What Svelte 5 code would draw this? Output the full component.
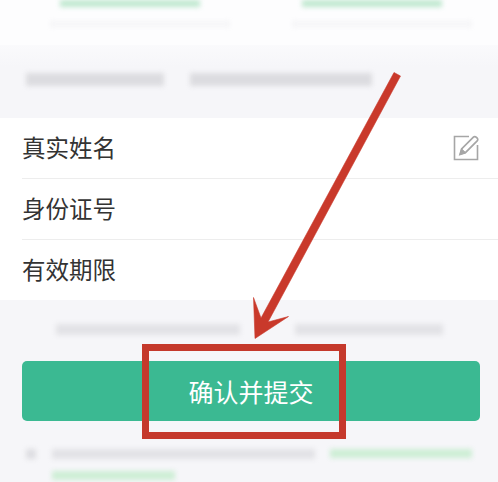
<script>
  const rows = ["真实姓名", "身份证号", "有效期限"];
</script>

<div class="page">
  <section class="top">
    <div class="pair">
      <div class="card">
        <span class="blur green-bar"></span>
        <span class="blur faint-bar"></span>
      </div>
      <div class="card">
        <span class="blur green-bar"></span>
        <span class="blur faint-bar"></span>
      </div>
    </div>
  </section>

  <div class="section-title">
    <span class="blur gray-bar first"></span>
    <span class="blur gray-bar second"></span>
  </div>

  <ul class="form">
    {#each rows as label, i}
      <li class="row">
        <span>{label}</span>
        {#if i === 0}
          <svg class="edit" width="28" height="28" viewBox="0 0 28 28" fill="none" stroke="#a6a6a6">
            <path d="M17 2.5H2.5v23h23V11" stroke-width="1.6" />
            <path d="M8 20.5l1.6-5.6L21.4 3.1a1.9 1.9 0 0 1 2.7 0l1.1 1.1a1.9 1.9 0 0 1 0 2.7L13.4 18.7z" fill="#fff" stroke-width="1.7" />
            <path d="M8 20.5l1.6-5.6 4 3.8z" fill="#a6a6a6" stroke-width="1" />
          </svg>
        {/if}
      </li>
    {/each}
  </ul>

  <div class="hint">
    <span class="blur gray-bar soft a"></span>
    <span class="blur gray-bar soft b"></span>
  </div>

  <button class="submit">确认并提交</button>

  <div class="agree">
    <span class="blur check"></span>
    <div class="lines">
      <div class="line">
        <span class="blur gray-bar soft c"></span>
        <span class="blur link d"></span>
      </div>
      <span class="blur link e"></span>
    </div>
  </div>

  <!-- red markup drawn on top of the screenshot -->
  <svg class="markup" width="498" height="482" viewBox="0 0 498 482">
    <path d="M394 72.5 L400.5 76 L268 322 L288.5 316.5 L255 338.5 L253.5 297.5 L261 318 Z" fill="#c9392b" stroke="#c9392b" stroke-width="0.6" stroke-linejoin="round" />
    <rect x="145.5" y="347.5" width="197" height="88" fill="none" stroke="#c5392c" stroke-width="7" />
  </svg>
</div>

<style>
  :global(body) {
    margin: 0;
    background: #f6f6f9;
  }

  .page {
    position: relative;
    width: 498px;
    height: 482px;
    overflow: hidden;
    font-family: "Noto Sans CJK SC", "Noto Sans", sans-serif;
    color: #333;
  }

  .blur {
    display: block;
    filter: blur(2.5px);
  }

  .top {
    height: 45px;
    background: #fdfdfe;
  }

  .pair {
    display: flex;
    padding: 0 26px 0 60px;
    gap: 102px;
  }

  .card {
    display: flex;
    flex-direction: column;
    gap: 14px;
    width: 140px;
  }

  .green-bar {
    height: 7px;
    background: #bfe8cf;
  }

  .faint-bar {
    width: 180px;
    height: 6px;
    margin-left: -10px;
    background: #f5f5f7;
  }

  .section-title {
    display: flex;
    align-items: center;
    gap: 26px;
    height: 73px;
    padding-left: 26px;
    padding-bottom: 4px;
    box-sizing: border-box;
    background: linear-gradient(#fafafc, #f6f6f9 30%);
  }

  .gray-bar {
    height: 13px;
    background: #dcdce0;
  }

  .first {
    width: 138px;
  }

  .second {
    width: 182px;
  }

  .form {
    margin: 0;
    padding: 0 0 0 22px;
    list-style: none;
    background: #fff;
  }

  .row {
    display: flex;
    align-items: center;
    justify-content: space-between;
    height: 60px;
    padding-right: 18px;
    border-bottom: 1px solid #ededed;
    font-size: 23.5px;
    line-height: 1;
  }

  .row:last-child {
    border-bottom: 0;
  }

  .edit {
    display: block;
  }

  .hint {
    display: flex;
    justify-content: flex-start;
    align-items: center;
    gap: 55px;
    height: 61px;
    padding-left: 56px;
    padding-bottom: 2px;
    box-sizing: border-box;
  }

  .soft {
    height: 11px;
    background: #e2e2e6;
  }

  .a {
    width: 184px;
  }

  .b {
    width: 148px;
  }

  .submit {
    display: block;
    width: 458px;
    height: 60px;
    margin: 0 0 0 22px;
    padding: 0;
    border: 0;
    border-radius: 5px;
    background: #3bb992;
    color: #fff;
    font: inherit;
    font-size: 25px;
  }

  .agree {
    display: flex;
    gap: 16px;
    padding: 28px 0 0 26px;
  }

  .check {
    width: 10px;
    height: 10px;
    background: #dedee2;
  }

  .lines {
    display: flex;
    flex-direction: column;
    gap: 12px;
  }

  .line {
    display: flex;
    gap: 15px;
  }

  .c {
    width: 263px;
    height: 10px;
  }

  .link {
    height: 9px;
    background: #cdeed5;
  }

  .d {
    width: 142px;
  }

  .e {
    width: 123px;
  }

  .markup {
    position: absolute;
    inset: 0;
    pointer-events: none;
  }
</style>
